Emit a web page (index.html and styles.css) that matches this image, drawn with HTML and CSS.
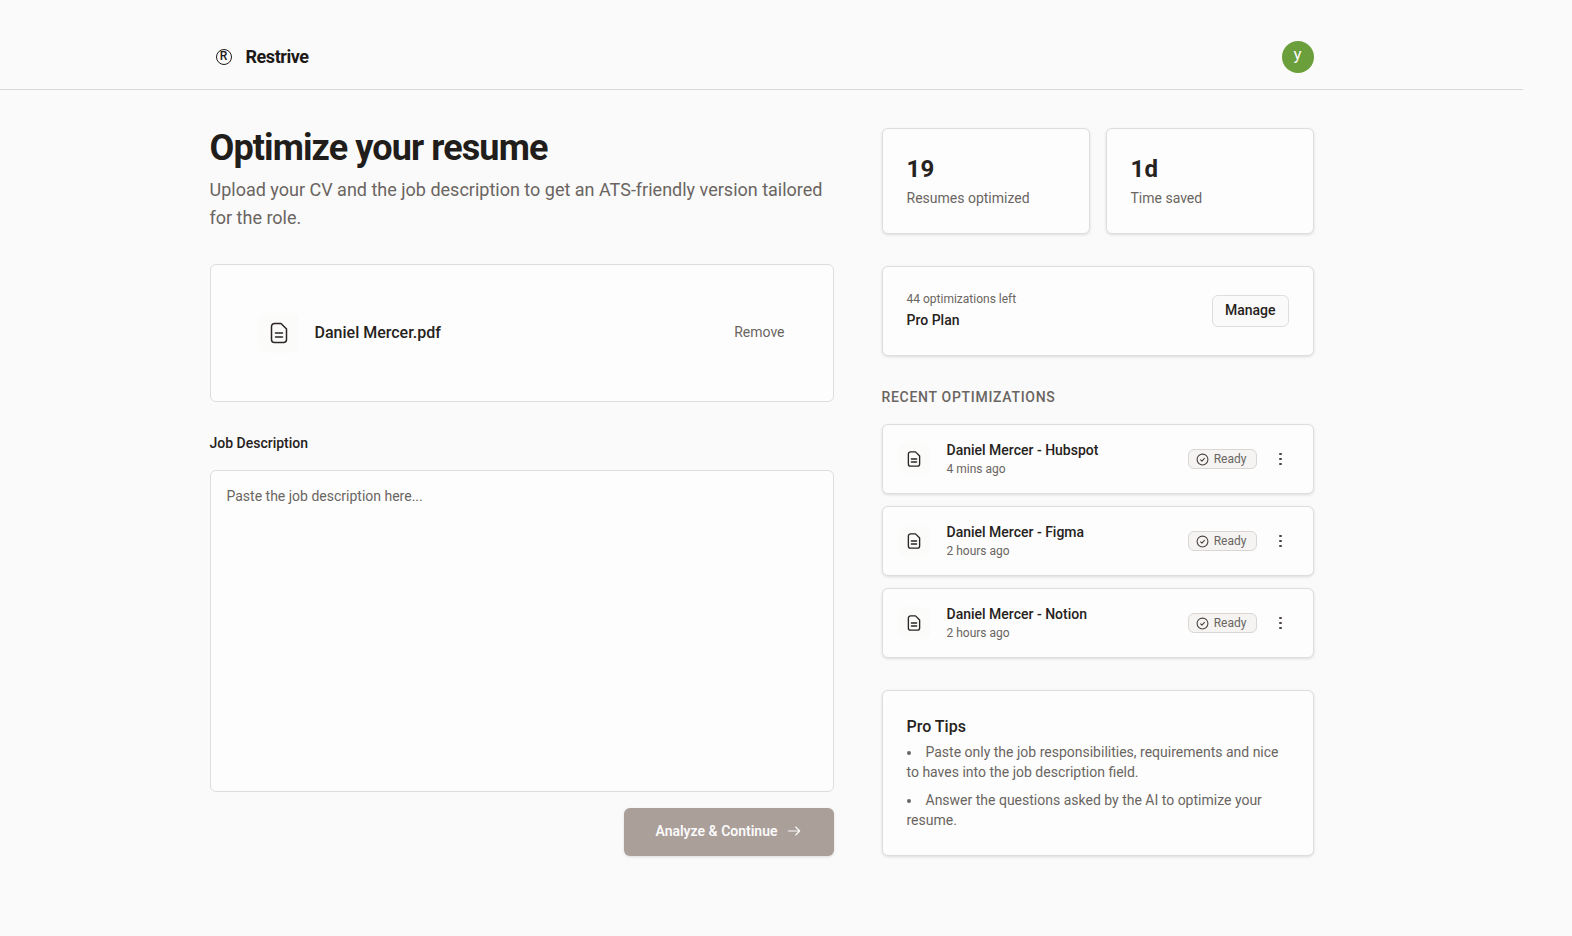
FILE: index.html
```html
<!DOCTYPE html>
<html lang="en">
<head>
<meta charset="utf-8">
<title>Restrive</title>
<link rel="stylesheet" href="styles.css">
</head>
<body>
<div class="app">
  <header class="topbar">
    <div class="container topbar-inner">
      <div class="brand">
        <span class="brand-mark">R</span>
        <span class="brand-name">Restrive</span>
      </div>
      <div class="avatar">y</div>
    </div>
  </header>
  <main class="container layout">
    <section class="left">
      <h1 class="title">Optimize your resume</h1>
      <p class="subtitle">Upload your CV and the job description to get an ATS-friendly version tailored for the role.</p>
      <div class="card upload">
        <div class="file">
          <span class="icon-box icon-box-lg">
            <svg class="doc doc-lg" viewBox="0 0 24 24"><path d="M14 2.500H7.500A3 3 0 0 0 4.500 5.500v13a3 3 0 0 0 3 3h9a3 3 0 0 0 3-3V8z"/><path d="M8.500 12h7M8.500 16h7"/></svg>
          </span>
          <span class="file-name">Daniel Mercer.pdf</span>
        </div>
        <span class="remove">Remove</span>
      </div>
      <label class="field-label" for="jd">Job Description</label>
      <textarea class="jd" id="jd" placeholder="Paste the job description here..."></textarea>
      <div class="actions">
        <button class="primary" type="button">Analyze &amp; Continue
          <svg class="arrow" viewBox="0 0 24 24"><path d="M3.500 12h17M14.500 6l6 6-6 6"/></svg>
        </button>
      </div>
    </section>
    <aside class="right">
      <div class="stats">
        <div class="card stat"><div class="stat-value">19</div><div class="stat-label">Resumes optimized</div></div>
        <div class="card stat"><div class="stat-value">1d</div><div class="stat-label">Time saved</div></div>
      </div>
      <div class="card plan">
        <div class="plan-text">
          <div class="plan-left">44 optimizations left</div>
          <div class="plan-name">Pro Plan</div>
        </div>
        <button class="manage" type="button">Manage</button>
      </div>
      <h2 class="section-title">Recent optimizations</h2>
      <div class="recent">
        <div class="card item">
          <span class="icon-box"><svg class="doc" viewBox="0 0 24 24"><path d="M14 2.500H7.500A3 3 0 0 0 4.500 5.500v13a3 3 0 0 0 3 3h9a3 3 0 0 0 3-3V8z"/><path d="M8.500 12h7M8.500 16h7"/></svg></span>
          <div class="item-text"><div class="item-title">Daniel Mercer - Hubspot</div><div class="item-time">4 mins ago</div></div>
          <span class="badge"><svg class="check" viewBox="0 0 24 24"><circle cx="12" cy="12" r="10"/><path d="M8.500 12.500l2.500 2.500 4.500-5"/></svg>Ready</span>
          <span class="kebab"><i></i><i></i><i></i></span>
        </div>
        <div class="card item">
          <span class="icon-box"><svg class="doc" viewBox="0 0 24 24"><path d="M14 2.500H7.500A3 3 0 0 0 4.500 5.500v13a3 3 0 0 0 3 3h9a3 3 0 0 0 3-3V8z"/><path d="M8.500 12h7M8.500 16h7"/></svg></span>
          <div class="item-text"><div class="item-title">Daniel Mercer - Figma</div><div class="item-time">2 hours ago</div></div>
          <span class="badge"><svg class="check" viewBox="0 0 24 24"><circle cx="12" cy="12" r="10"/><path d="M8.500 12.500l2.500 2.500 4.500-5"/></svg>Ready</span>
          <span class="kebab"><i></i><i></i><i></i></span>
        </div>
        <div class="card item">
          <span class="icon-box"><svg class="doc" viewBox="0 0 24 24"><path d="M14 2.500H7.500A3 3 0 0 0 4.500 5.500v13a3 3 0 0 0 3 3h9a3 3 0 0 0 3-3V8z"/><path d="M8.500 12h7M8.500 16h7"/></svg></span>
          <div class="item-text"><div class="item-title">Daniel Mercer - Notion</div><div class="item-time">2 hours ago</div></div>
          <span class="badge"><svg class="check" viewBox="0 0 24 24"><circle cx="12" cy="12" r="10"/><path d="M8.500 12.500l2.500 2.500 4.500-5"/></svg>Ready</span>
          <span class="kebab"><i></i><i></i><i></i></span>
        </div>
      </div>
      <div class="card tips">
        <h3 class="tips-title">Pro Tips</h3>
        <ul class="tips-list">
          <li>Paste only the job responsibilities, requirements and nice to haves into the job description field.</li>
          <li>Answer the questions asked by the AI to optimize your resume.</li>
        </ul>
      </div>
    </aside>
  </main>
</div>
</body>
</html>
```
FILE: styles.css
```css
* { box-sizing: border-box; }
html, body { margin: 0; padding: 0; background: #fafafa; }
body { font-family: Roboto, "Liberation Sans", sans-serif; color: #262220; overflow: hidden; }
.app { width: 1523px; min-height: 936px; }
.container { width: 1152px; margin: 0 auto; padding: 0 24px; }

.topbar { height: 90px; border-bottom: 1px solid #d9d9d9; }
.topbar-inner { height: 89px; display: flex; align-items: center; justify-content: space-between; padding-top: 24px; }
.brand { display: flex; align-items: center; gap: 14px; padding-left: 6px; }
.brand-mark { width: 16px; height: 16px; border: 1.5px solid #1c1917; border-radius: 50%; color: #1c1917; font-size: 12px; line-height: 13px; font-weight: 500; text-align: center; }
.brand-name { font-size: 18px; font-weight: 700; letter-spacing: -0.45px; line-height: 28px; color: #1c1917; }
.avatar { width: 32px; height: 32px; border-radius: 50%; background: #6b9f3b; color: #fafafa; font-size: 17px; line-height: 26px; text-align: center; }

.layout { display: flex; gap: 48px; padding-top: 38px; }
.left { width: 624px; }
.right { width: 432px; }

.title { margin: 0; font-size: 36px; line-height: 40px; font-weight: 700; letter-spacing: -0.9px; color: #211d1b; }
.subtitle { margin: 8px 0 0; font-size: 18px; line-height: 28px; color: #6a6561; }

.card { background: #fdfdfd; border: 1px solid #dedede; border-radius: 6px; }
.upload { margin-top: 32px; height: 138px; padding: 48px; display: flex; align-items: center; justify-content: space-between; }
.file { display: flex; align-items: center; gap: 16px; }
.icon-box { width: 32px; height: 32px; border-radius: 8px; background: #fbfbfa; display: flex; align-items: center; justify-content: center; flex: none; }
.icon-box-lg { width: 40px; height: 40px; }
.doc { width: 18px; height: 18px; margin-left: -1px; fill: none; stroke: #2b2624; stroke-width: 1.8; stroke-linejoin: round; stroke-linecap: round; }
.doc-lg { width: 24px; height: 24px; margin-left: 0; stroke-width: 1.5; }
.file-name { font-size: 16px; line-height: 24px; font-weight: 500; }
.remove { padding-bottom: 2px; font-size: 14px; line-height: 20px; color: #6a6561; }

.field-label { display: block; margin-top: 31px; font-size: 14px; line-height: 20px; font-weight: 500; }
.jd { display: block; width: 100%; height: 322px; margin-top: 17px; padding: 15px 16px; background: #fdfdfd; border: 1px solid #dedede; border-radius: 6px; font-family: inherit; font-size: 14px; line-height: 20px; color: #262220; resize: none; outline: none; }
.jd::placeholder { color: #6a6561; opacity: 1; }
.actions { display: flex; justify-content: flex-end; margin-top: 16px; }
.primary { height: 48px; width: 210px; padding: 0 0 2px; display: flex; align-items: center; justify-content: center; gap: 8px; border: 0; border-radius: 6px; background: #ab9f9a; color: #fafafa; font-family: inherit; font-size: 14px; font-weight: 600; box-shadow: 0 1px 3px rgba(0,0,0,.12); }
.arrow { width: 16px; height: 16px; fill: none; stroke: #fafafa; stroke-width: 1.6; stroke-linecap: round; stroke-linejoin: round; }

.stats { display: flex; gap: 16px; }
.stat { flex: 1; height: 106px; padding: 24px; box-shadow: 0 1px 3px rgba(0,0,0,.12); }
.stat-value { font-size: 24px; line-height: 32px; font-weight: 700; letter-spacing: 0.2px; }
.stat-label { margin-top: 3px; font-size: 14px; line-height: 20px; color: #6a6561; }
.plan { margin-top: 32px; height: 90px; padding: 0 24px; display: flex; align-items: center; justify-content: space-between; box-shadow: 0 1px 3px rgba(0,0,0,.12); }
.plan-text { padding-bottom: 1px; }
.plan-left { font-size: 12px; line-height: 16px; color: #6a6561; }
.plan-name { margin-top: 3px; font-size: 14px; line-height: 20px; font-weight: 500; }
.manage { height: 32px; padding: 0 12px 2px; border: 1px solid #dedede; border-radius: 6px; background: #fafafa; color: #262220; font-family: inherit; font-size: 14px; font-weight: 500; }

.section-title { margin: 31px 0 0; font-size: 14px; line-height: 20px; font-weight: 500; letter-spacing: 0.7px; text-transform: uppercase; color: #6a6561; }
.recent { margin-top: 17px; display: flex; flex-direction: column; gap: 12px; }
.item { height: 70px; padding: 0 16px; display: flex; align-items: center; gap: 16px; box-shadow: 0 1px 3px rgba(0,0,0,.12); }
.item-text { flex: 1; min-width: 0; padding-bottom: 2px; }
.item-title { font-size: 14px; line-height: 20px; font-weight: 500; }
.item-time { font-size: 12px; line-height: 16px; color: #6a6561; margin-top: 1px; }
.badge { height: 20px; width: 69px; padding-right: 2px; display: flex; align-items: center; justify-content: center; gap: 5px; border: 1px solid #d9d6d3; border-radius: 6px; background: #f5f4f3; font-size: 12px; color: #6a6561; }
.check { width: 13px; height: 13px; fill: none; stroke: #4a4340; stroke-width: 2; stroke-linecap: round; stroke-linejoin: round; }
.kebab { width: 32px; height: 32px; margin-left: -8px; display: flex; flex-direction: column; align-items: center; justify-content: center; gap: 2.500px; }
.kebab i { width: 2.500px; height: 2.500px; border-radius: 50%; background: #4a4340; }

.tips { margin-top: 32px; height: 166px; padding: 24px; box-shadow: 0 1px 3px rgba(0,0,0,.12); }
.tips-title { margin: 0 0 3px; font-size: 16px; line-height: 24px; font-weight: 500; }
.tips-list { margin: 0; padding: 0; list-style: inside disc; font-size: 14px; line-height: 20px; color: #6a6561; }
.tips-list li + li { margin-top: 8px; }
```
